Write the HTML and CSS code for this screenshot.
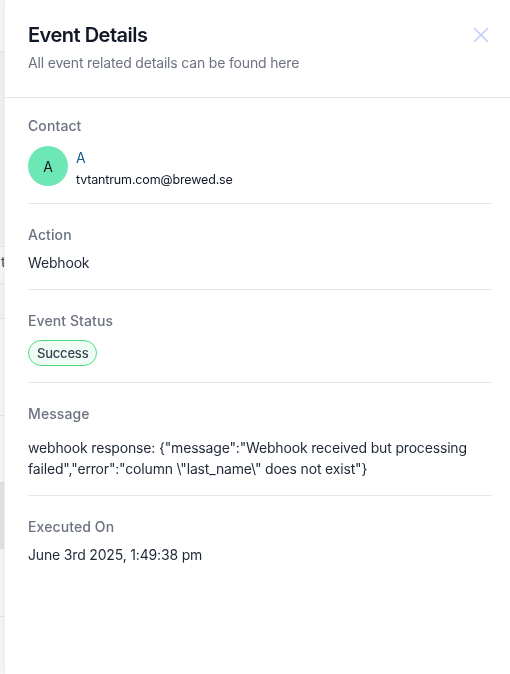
FILE: index.html
```html
<!DOCTYPE html>
<html>
<head>
<meta charset="utf-8">
<link rel="stylesheet" href="styles.css">
</head>
<body>
<div class="page">
  <div class="bg-top"></div>
  <div class="bg-gray"></div>
  <div class="bg-row"><span class="bg-text">t</span></div>
  <div class="bg-row2"></div>
  <div class="bg-row3"></div>
  <div class="bg-row4"></div>
  <div class="bg-block"></div>
  <div class="bg-row5"></div>
  <div class="bg-row6"></div>
</div>
<aside class="drawer">
  <header class="drawer-header">
    <div>
      <h1 class="title">Event Details</h1>
      <p class="subtitle">All event related details can be found here</p>
    </div>
    <button class="close" aria-label="Close">
      <svg width="16" height="16" viewBox="0 0 16 16"><path d="M1.5 1.5L14.5 14.5M14.5 1.5L1.5 14.5" stroke="#c3cdfb" stroke-width="1.6" stroke-linecap="round" fill="none"/></svg>
    </button>
  </header>
  <div class="body">
    <section class="section contact-sec">
      <div class="label">Contact</div>
      <div class="contact">
        <div class="avatar">A</div>
        <div class="contact-info">
          <div class="name">A</div>
          <div class="email">tvtantrum.com@brewed.se</div>
        </div>
      </div>
    </section>
    <section class="section">
      <div class="label">Action</div>
      <div class="value">Webhook</div>
    </section>
    <section class="section status-sec">
      <div class="label">Event Status</div>
      <div><span class="badge">Success</span></div>
    </section>
    <section class="section msg-sec">
      <div class="label">Message</div>
      <div class="value message">webhook response: {"message":"Webhook received but processing failed","error":"column \"last_name\" does not exist"}</div>
    </section>
    <section class="section last">
      <div class="label">Executed On</div>
      <div class="value">June 3rd 2025, 1:49:38 pm</div>
    </section>
  </div>
</aside>
</body>
</html>
```
FILE: styles.css
```css
* { box-sizing: border-box; }
html, body { margin: 0; padding: 0; }
body {
  width: 510px;
  height: 674px;
  overflow: hidden;
  font-family: Inter, "Noto Sans", sans-serif;
  background: #f9f9fa;
}
.page { width: 510px; }
.bg-top { height: 52px; background: #f9f9fa; border-bottom: 1px solid #e5e7eb; }
.bg-gray { height: 195px; background: #f3f4f6; border-bottom: 1px solid #e5e7eb; }
.bg-row { height: 37px; background: #f9f9fa; border-bottom: 1px solid #e5e7eb; font-size: 14px; color: #374151; padding-left: 1px; }
.bg-text { display: inline-block; margin-top: 6px; }
.bg-row2 { height: 35px; background: #f5f5f7; border-bottom: 1px solid #e5e7eb; }
.bg-row3 { height: 97px; background: #f9f9fa; border-bottom: 1px solid #e5e7eb; }
.bg-row4 { height: 66px; background: #f9f9fa; }
.bg-block { height: 67px; background: #e4e5e8; }
.bg-row5 { height: 68px; background: #f9f9fa; border-bottom: 1px solid #e5e7eb; }
.bg-row6 { height: 60px; background: #f9f9fa; }

.drawer {
  position: fixed;
  top: 0;
  left: 4px;
  right: 0;
  bottom: 0;
  background: #fff;
  box-shadow: -2px 0 8px rgba(0,0,0,0.06);
  border-left: 1px solid #eceef1;
}
.drawer-header {
  display: flex;
  justify-content: space-between;
  align-items: flex-start;
  padding: 23px 21px 0 23px;
  height: 98px;
  border-bottom: 1px solid #e5e7eb;
}
.title {
  margin: 0;
  font-size: 20px;
  line-height: 24px;
  font-weight: 600;
  color: #111827;
  letter-spacing: -0.5px;
}
.subtitle {
  margin: 6px 0 0;
  font-size: 14px;
  line-height: 20px;
  color: #6b7280;
  letter-spacing: -0.17px;
}
.close {
  border: 0;
  background: none;
  padding: 0;
  margin-top: 4px;
  width: 16px;
  height: 16px;
  cursor: pointer;
}
.close svg { display: block; }
.body { padding: 0 18px 0 23px; }
.section {
  padding: 18px 0 16px;
  border-bottom: 1px solid #e5e7eb;
  display: flex;
  flex-direction: column;
  gap: 8px;
}
.section.last { border-bottom: 0; padding-top: 22px; }
.section + .section { padding-top: 21px; }
.label {
  font-size: 14px;
  line-height: 20px;
  font-weight: 500;
  color: #6b7280;
  letter-spacing: 0.1px;
}
.value {
  font-size: 14px;
  line-height: 20px;
  color: #1f2937;
  letter-spacing: -0.17px;
}
.contact-sec { gap: 10px; padding-bottom: 17px; }
.contact { display: flex; align-items: flex-start; gap: 8px; height: 40px; }
.avatar {
  width: 40px;
  height: 40px;
  border-radius: 50%;
  background: #6ee7b7;
  color: #111827;
  font-size: 14px;
  display: flex;
  align-items: center;
  justify-content: center;
  flex-shrink: 0;
}
.contact-info { display: flex; flex-direction: column; margin-top: 2px; }
.name { font-size: 14px; line-height: 20px; color: #1d5b8c; }
.email { font-size: 12.5px; line-height: 20px; color: #111827; margin-top: 2px; letter-spacing: -0.15px; }
.status-sec { gap: 9px; }
.badge {
  display: inline-block;
  font-size: 13px;
  line-height: 18px;
  font-weight: 500;
  color: #374151;
  background: #f0fdf4;
  border: 1px solid #4ade80;
  border-radius: 999px;
  padding: 3px 8px;
  letter-spacing: -0.2px;
}
.msg-sec { gap: 13px; }
.message { line-height: 21px; }
```
